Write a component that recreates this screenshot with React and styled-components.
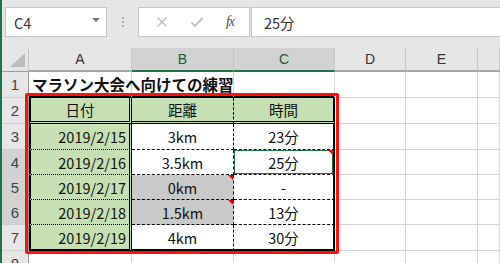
import styled, { createGlobalStyle } from "styled-components";

const GlobalStyle = createGlobalStyle`
  body {
    margin: 0;
    background: #ffffff;
  }
`;

const FONT = `"Noto Sans CJK JP", "Noto Sans", sans-serif`;
const GRID = "1px solid #d4d4d4";
const BLACK = "2px solid #000";
const DOUBLE = "3px double #000";
const DASH = "1px dashed #000";
const DOT = "1px dotted #000";

const Window = styled.div`
  position: relative;
  width: 500px;
  height: 263px;
  overflow: hidden;
  box-sizing: border-box;
  border-left: 2px solid #217346;
  background: #e6e6e6;
  font-family: ${FONT};
  display: flex;
  flex-direction: column;
`;

// formula bar at the top
const FormulaBar = styled.div`
  height: 48px;
  flex: none;
  display: flex;
  align-items: flex-start;
  padding: 7px 0 0 3px;
  box-sizing: border-box;
`;

const NameBox = styled.div`
  width: 102px;
  height: 30px;
  box-sizing: border-box;
  background: #fff;
  border: 1px solid #c6c6c6;
  display: flex;
  align-items: center;
  justify-content: space-between;
  padding: 0 6px 0 8px;
  font-size: 14.5px;
  color: #333;
`;

const Caret = styled.span`
  width: 0;
  height: 0;
  border-left: 4px solid transparent;
  border-right: 4px solid transparent;
  border-top: 4px solid #777;
  margin-top: -4px;
`;

const Grip = styled.div`
  width: 31px;
  height: 30px;
  display: flex;
  flex-direction: column;
  align-items: center;
  justify-content: center;
  gap: 2px;
  span {
    width: 2px;
    height: 2px;
    background: #b0b0b0;
  }
`;

const IconBox = styled.div`
  width: 112px;
  height: 30px;
  box-sizing: border-box;
  background: #fff;
  border: 1px solid #c6c6c6;
  display: flex;
  align-items: center;
  justify-content: space-around;
  padding: 0 4px 0 6px;
`;

const Fx = styled.span`
  font-family: "Liberation Serif", serif;
  font-style: italic;
  font-size: 14px;
  color: #555;
  letter-spacing: -1px;
`;

const InputBox = styled.div`
  flex: 1;
  height: 30px;
  margin-left: 1px;
  box-sizing: border-box;
  background: #fff;
  border: 1px solid #c6c6c6;
  border-right: none;
  display: flex;
  align-items: center;
  padding-left: 12px;
  font-size: 14.5px;
  color: #333;
`;

// sheet grid
const Sheet = styled.div`
  display: grid;
  grid-template-columns: 27px 103px 102px 101px 71px 72px 1fr;
  grid-template-rows: 24px 26px 26px 26px 25px 25px 25px 26px 25px;
  background: #fff;
`;

const Corner = styled.div`
  background: #e6e6e6;
  border-right: 1px solid #c6c6c6;
  border-bottom: 1px solid #9b9b9b;
  display: flex;
  align-items: flex-end;
  justify-content: flex-end;
  padding: 0 3px 4px 0;
  box-sizing: border-box;
`;

const ColHead = styled.div`
  box-sizing: border-box;
  background: ${(p) => (p.$active ? "#d2d2d2" : "#e6e6e6")};
  border-right: 1px solid #c6c6c6;
  border-bottom: ${(p) => (p.$active ? "2px solid #217346" : "2px solid #a6a6a6")};
  display: flex;
  align-items: center;
  justify-content: center;
  font-family: "Liberation Sans", sans-serif;
  font-size: 14px;
  color: ${(p) => (p.$active ? "#1e5c3a" : "#333")};
`;

const RowHead = styled.div`
  box-sizing: border-box;
  background: ${(p) => (p.$active ? "#d2d2d2" : "#e6e6e6")};
  border-right: 1px solid #9b9b9b;
  border-bottom: 1px solid #cfcfcf;
  display: flex;
  align-items: center;
  justify-content: center;
  font-family: "Liberation Sans", sans-serif;
  font-size: 15px;
  color: #444;
`;

const Cell = styled.div`
  position: relative;
  z-index: ${(p) => (p.$spill ? 1 : "auto")};
  box-sizing: border-box;
  background: ${(p) => p.$bg || "#fff"};
  border-right: ${(p) => p.$right || GRID};
  border-bottom: ${(p) => p.$bottom || GRID};
  border-left: ${(p) => p.$left || "none"};
  box-shadow: ${(p) => (p.$selected ? "inset 0 0 0 1px #217346" : "none")};
  display: flex;
  align-items: center;
  justify-content: ${(p) => p.$align || "center"};
  padding: 0 3px;
  font-size: ${(p) => (p.$bold ? "15.5px" : "14.5px")};
  font-weight: ${(p) => (p.$bold ? 700 : 400)};
  color: #111;
  white-space: nowrap;
  overflow: ${(p) => (p.$spill ? "visible" : "hidden")};

  &::after {
    content: "";
    display: ${(p) => (p.$note ? "block" : "none")};
    position: absolute;
    top: 0;
    right: 0;
    border-top: 5px solid #e00000;
    border-left: 5px solid transparent;
  }
`;

const Highlight = styled.div`
  position: absolute;
  z-index: 2;
  left: 23px;
  top: 93px;
  width: 314px;
  height: 161px;
  box-sizing: border-box;
  border: 3px solid #ff1010;
  border-radius: 2px;
  pointer-events: none;
`;

const GREEN = "#c6e0b4";
const GRAY = "#c9c9c9";

const rows = [
  { d: "2019/2/15", km: "3km", t: "23分" },
  { d: "2019/2/16", km: "3.5km", t: "25分", sel: true },
  { d: "2019/2/17", km: "0km", t: "-", gray: true },
  { d: "2019/2/18", km: "1.5km", t: "13分", gray: true },
  { d: "2019/2/19", km: "4km", t: "30分" },
];

const Blank = () => (
  <>
    <Cell />
    <Cell />
    <Cell />
  </>
);

export default function App() {
  return (
    <Window>
      <GlobalStyle />
      <FormulaBar>
        <NameBox>
          C4
          <Caret />
        </NameBox>
        <Grip>
          <span />
          <span />
          <span />
        </Grip>
        <IconBox>
          <svg width="12" height="12" viewBox="0 0 12 12">
            <path d="M1.5 1.5 L10.5 10.5 M10.5 1.5 L1.5 10.5" stroke="#c4c4c4" strokeWidth="1.6" />
          </svg>
          <svg width="14" height="12" viewBox="0 0 14 12">
            <path d="M1.5 6.5 L5 10 L12.5 2" stroke="#c4c4c4" strokeWidth="2" fill="none" />
          </svg>
          <Fx>fx</Fx>
        </IconBox>
        <InputBox>25分</InputBox>
      </FormulaBar>

      <Sheet>
        <Corner>
          <svg width="15" height="14" viewBox="0 0 15 14">
            <path d="M15 0 L15 14 L0 14 Z" fill="#bcbcbc" />
          </svg>
        </Corner>
        <ColHead>A</ColHead>
        <ColHead $active>B</ColHead>
        <ColHead $active>C</ColHead>
        <ColHead>D</ColHead>
        <ColHead>E</ColHead>
        <ColHead />

        <RowHead>1</RowHead>
        <Cell $bold $align="flex-start" $spill $bottom={BLACK}>
          マラソン大会へ向けての練習
        </Cell>
        <Cell $bottom={BLACK} />
        <Cell $bottom={BLACK} />
        <Blank />

        <RowHead>2</RowHead>
        <Cell $bg={GREEN} $left={BLACK} $right={DOUBLE} $bottom={DOUBLE}>
          日付
        </Cell>
        <Cell $bg={GREEN} $right={DASH} $bottom={DOUBLE}>
          距離
        </Cell>
        <Cell $bg={GREEN} $right={BLACK} $bottom={DOUBLE}>
          時間
        </Cell>
        <Blank />

        {rows.map((r, i) => {
          const last = i === rows.length - 1;
          const n = i + 3;
          return [
            <RowHead key={`h${n}`} $active={n >= 4 && n <= 6}>
              {n}
            </RowHead>,
            <Cell
              key={`a${n}`}
              $bg={GREEN}
              $align="flex-end"
              $left={BLACK}
              $right={DOUBLE}
              $bottom={last ? BLACK : DOT}
            >
              {r.d}
            </Cell>,
            <Cell
              key={`b${n}`}
              $bg={r.gray ? GRAY : "#fff"}
              $note={r.gray}
              $right={DASH}
              $bottom={last ? BLACK : DASH}
            >
              {r.km}
            </Cell>,
            <Cell
              key={`c${n}`}
              $selected={r.sel}
              $note={r.sel}
              $right={BLACK}
              $bottom={last ? BLACK : DASH}
            >
              {r.t}
            </Cell>,
            <Cell key={`d${n}`} />,
            <Cell key={`e${n}`} />,
            <Cell key={`f${n}`} />,
          ];
        })}

        <RowHead>8</RowHead>
        <Cell />
        <Cell />
        <Cell />
        <Blank />
      </Sheet>

      <Highlight />
    </Window>
  );
}
